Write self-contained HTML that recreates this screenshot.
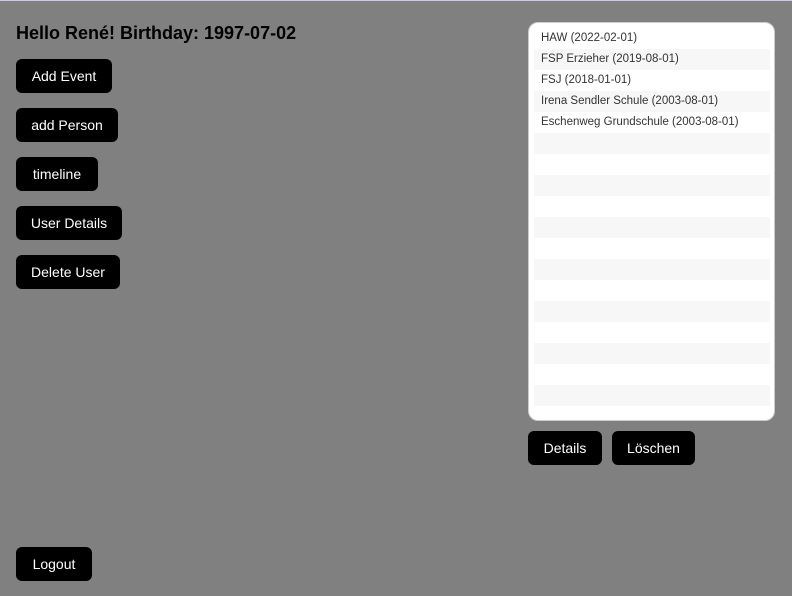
<!DOCTYPE html>
<html><head><style>
body{margin:0;width:792px;height:596px;background:#808080;font-family:"Liberation Sans",sans-serif;position:relative;overflow:hidden;border-top:1px solid #ccd;box-sizing:border-box}
h1{position:absolute;left:16px;top:21px;margin:0;font-size:18px;font-weight:bold;color:#000;line-height:22px}
.b{position:absolute;background:#000;color:#fff;font-size:14px;border-radius:6px;height:34px;line-height:34px;padding:0 14px;box-sizing:border-box;white-space:nowrap;text-align:center}
.p{position:absolute;left:528px;top:21px;width:247px;height:399px;background:#fff;border:1px solid #ccc;border-radius:10px;box-sizing:border-box}
.r{position:absolute;left:5px;width:236px;height:21px;line-height:21px;font-size:11.5px;color:#333;padding-left:7px;box-sizing:border-box;white-space:nowrap}
.s{background:#f7f7f7}
</style></head><body>
<h1>Hello René! Birthday: 1997-07-02</h1>
<div class="b" style="left:16px;top:58px;width:96px">Add Event</div>
<div class="b" style="left:16px;top:107px;width:102px">add Person</div>
<div class="b" style="left:16px;top:156px;width:82px">timeline</div>
<div class="b" style="left:16px;top:205px;width:106px">User Details</div>
<div class="b" style="left:16px;top:254px;width:104px">Delete User</div>
<div class="b" style="left:16px;top:546px;width:76px">Logout</div>
<div class="b" style="left:528px;top:430px;width:74px">Details</div>
<div class="b" style="left:612px;top:430px;width:83px">Löschen</div>
<div class="p">
<div class="r" style="top:5px">HAW (2022-02-01)</div>
<div class="r s" style="top:26px">FSP Erzieher (2019-08-01)</div>
<div class="r" style="top:47px">FSJ (2018-01-01)</div>
<div class="r s" style="top:68px">Irena Sendler Schule (2003-08-01)</div>
<div class="r" style="top:89px">Eschenweg Grundschule (2003-08-01)</div>
<div class="r s" style="top:110px"></div>
<div class="r s" style="top:152px"></div>
<div class="r s" style="top:194px"></div>
<div class="r s" style="top:236px"></div>
<div class="r s" style="top:278px"></div>
<div class="r s" style="top:320px"></div>
<div class="r s" style="top:362px"></div>
</div>
</body></html>
